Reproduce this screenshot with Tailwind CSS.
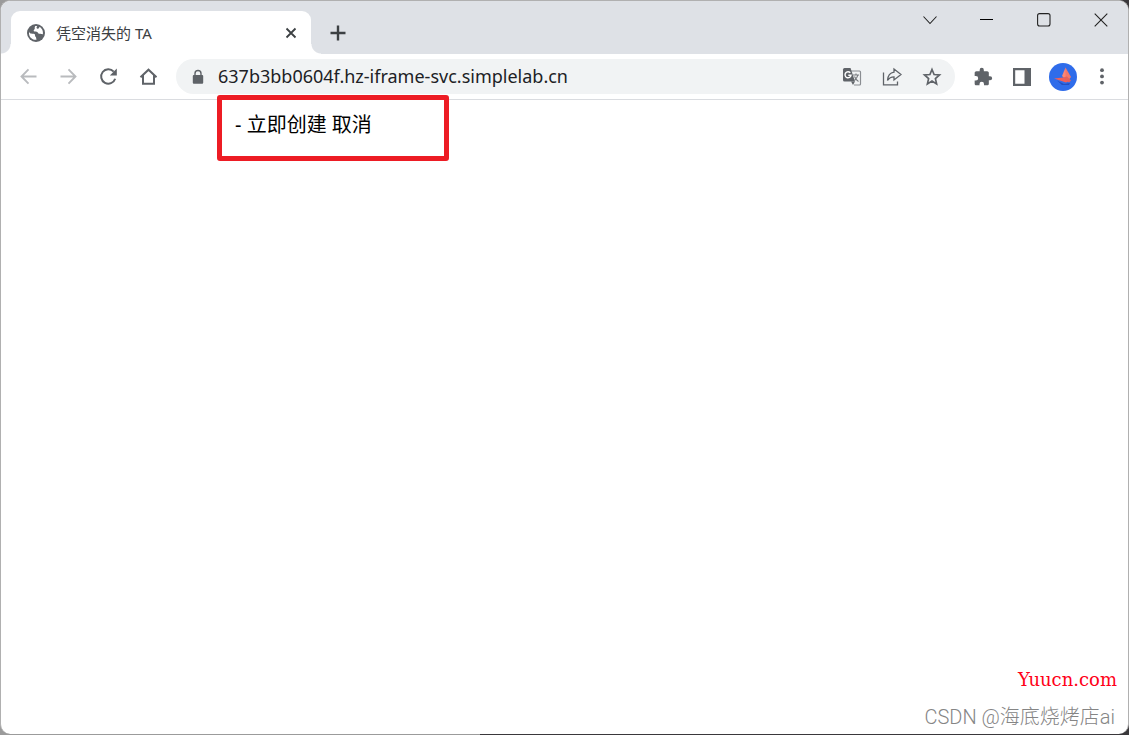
<!DOCTYPE html>
<html lang="zh-CN">
<head>
  <meta charset="UTF-8">
  <meta name="viewport" content="width=device-width, initial-scale=1.0">
  <title>凭空消失的 TA</title>
  <script src="https://cdn.jsdelivr.net/npm/@tailwindcss/browser@4"></script>
</head>
<body class="min-h-screen flex flex-col bg-[linear-gradient(to_right,#9b9b9b_480px,#3a383b_480px)] font-['Noto_Sans','Noto_Sans_CJK_SC',sans-serif] text-black">
  <div class="relative flex-1 flex flex-col border-t border-x border-[#b0b0b0] mb-px rounded-[10px] bg-white overflow-hidden">

    <!-- Tab strip -->
    <header class="h-[53px] flex items-end bg-[#dee1e6]">
      <div class="w-[10px] h-[10px] bg-[radial-gradient(circle_at_0_0,#dee1e6_9px,#fff_10px)]"></div>
      <div class="w-[300px] h-[43px] flex items-center pl-4 pr-[10px] rounded-t-[9px] bg-white">
        <svg class="w-[18px] h-[18px]" viewBox="0 0 18 18">
          <circle cx="9" cy="9" r="9" fill="#5f6368"/>
          <path fill="#fff" d="M2 7.5C2.500 9.800 4.500 9.500 6.500 9.800C8 10 8.300 11 8 12.200C9.300 12.500 9 14 9.500 15.800C6 16.300 2 13.500 2 9.500ZM8.300 2C7 3.500 8.500 4.500 7.300 5.500C6.200 6.300 6.500 7.700 8 7.500C10 7.200 10.500 8 11.200 9.200C12 10.300 14 9.700 15.900 10.200C16.500 6.500 14.500 3.800 12.300 2.700C12.500 4.500 11 5 10 4.500C9.300 4 9.500 3 10.200 2.100Z"/>
        </svg>
        <span class="flex-1 ml-[11px] text-[15px] leading-5 text-[#3c4043]">凭空消失的 TA</span>
        <button class="p-1" aria-label="关闭标签页">
          <svg class="w-3 h-3" viewBox="0 0 12 12" fill="none" stroke="#3c4043" stroke-width="1.800"><path d="M1.500 1.500l9 9M10.500 1.500l-9 9"/></svg>
        </button>
      </div>
      <div class="w-[10px] h-[10px] bg-[radial-gradient(circle_at_100%_0,#dee1e6_9px,#fff_10px)]"></div>
      <button class="self-center mt-[10px] ml-2 p-px" aria-label="新标签页">
        <svg class="w-4 h-4" viewBox="0 0 16 16" fill="none" stroke="#3c4043" stroke-width="2.400"><path d="M8 .5v15M.5 8h15"/></svg>
      </button>
      <div class="ml-auto self-start flex items-center h-[38px] pr-[20px] gap-[43px]">
        <button aria-label="搜索标签页">
          <svg class="w-[14px] h-[14px]" viewBox="0 0 14 14" fill="none" stroke="#222" stroke-width="1.100"><path d="M.5 3.500L7 10.500l6.500-7"/></svg>
        </button>
        <button aria-label="最小化">
          <svg class="w-[14px] h-[14px]" viewBox="0 0 14 14" fill="none" stroke="#000"><path d="M0 6.500h13"/></svg>
        </button>
        <button aria-label="最大化">
          <svg class="w-[14px] h-[14px]" viewBox="0 0 14 14" fill="none" stroke="#222" stroke-width="1.100"><rect x=".6" y=".6" width="12.400" height="12.400" rx="2"/></svg>
        </button>
        <button aria-label="关闭">
          <svg class="w-[14px] h-[14px]" viewBox="0 0 14 14" fill="none" stroke="#222" stroke-width="1.100"><path d="M.7 .7l12.600 12.600M13.300 .7L.7 13.300"/></svg>
        </button>
      </div>
    </header>

    <!-- Toolbar -->
    <nav class="h-[46px] flex items-center pl-[18px] pr-4 border-b border-[#dadce0] bg-white">
      <div class="flex items-center gap-5">
        <button aria-label="后退">
          <svg class="w-5 h-5" viewBox="0 0 20 20" fill="none" stroke="#b9bbbe" stroke-width="1.900"><path d="M17.500 9.500H3M9.500 2.300L2.500 9.500l7 7.200"/></svg>
        </button>
        <button aria-label="前进">
          <svg class="w-5 h-5" viewBox="0 0 20 20" fill="none" stroke="#b9bbbe" stroke-width="1.900"><path d="M1.500 9.500H16.500M9.500 2.300l7 7.200-7 7.200"/></svg>
        </button>
        <button aria-label="重新加载">
          <svg class="w-5 h-5" viewBox="0 0 20 20"><path d="M16.200 11.700A7.200 7.200 0 1 1 14.700 4.600" fill="none" stroke="#5f6368" stroke-width="2"/><path d="M17.800 1.400v7h-7z" fill="#5f6368"/></svg>
        </button>
        <button aria-label="主页">
          <svg class="w-5 h-5" viewBox="0 0 20 20" fill="none" stroke="#5f6368" stroke-width="2"><path d="M1.500 10.300L9.500 2.700l8 7.600M4 8.500v8.200h11V8.500"/></svg>
        </button>
      </div>

      <div class="flex-1 h-[35px] flex items-center ml-[17px] pl-[15px] pr-[13px] rounded-full bg-[#f1f3f4]">
        <svg class="w-[14px] h-4 shrink-0" viewBox="0 0 14 16"><path d="M4 7V4.500a3 3 0 0 1 6 0V7" fill="none" stroke="#5f6368" stroke-width="1.400"/><rect x="1.800" y="6" width="10.400" height="8.800" rx="1" fill="#5f6368"/></svg>
        <input type="text" aria-label="地址" value="637b3bb0604f.hz-iframe-svc.simplelab.cn" class="flex-1 min-w-0 ml-[13px] pb-px bg-transparent text-[18px] leading-6 text-[#202124] outline-none">
        <div class="flex items-center gap-5">
          <button aria-label="翻译此页">
            <svg class="w-5 h-5" viewBox="0 0 20 20">
              <path d="M9 4h8.500q1 0 1 1v12q0 1-1 1H12" fill="none" stroke="#8a8d91" stroke-width="1.200"/>
              <path d="M2.500 1h6l4.500 13.500H2.500Q1 14.500 1 13V2.500Q1 1 2.500 1Z" fill="#5f6368"/>
              <path d="M9 14.500h4l-2 3.500z" fill="#5f6368"/>
              <path d="M8.300 5.800A3 3 0 1 0 9 8.300H6.300" fill="none" stroke="#fff" stroke-width="1.400"/>
              <path d="M11 8h6M14 6.500v1.500M15.800 8.300q-1 3-3.300 5.200M12.500 9.500q1.500 3.500 4 5" fill="none" stroke="#777a7e" stroke-width="1.100"/>
            </svg>
          </button>
          <button aria-label="分享此页">
            <svg class="w-5 h-5" viewBox="0 0 20 20" fill="none" stroke="#5f6368" stroke-width="1.300"><path d="M1.500 5.500v12.300h14V14.500M12 2l7 5.500-7 5.500V9.800C9 9.800 7 11 5.500 13.500 5.800 9 8 5.800 12 5.200Z"/></svg>
          </button>
          <button aria-label="为此标签页添加书签">
            <svg class="w-5 h-5" viewBox="0 0 20 20" fill="none" stroke="#5f6368" stroke-width="1.700"><path d="M10 2.500l2.100 5 5.400.5-4.100 3.600 1.200 5.300L10 14.100l-4.600 2.800 1.200-5.300L2.500 8l5.400-.5Z"/></svg>
          </button>
        </div>
      </div>

      <div class="flex items-center ml-[18px]">
        <button aria-label="扩展程序">
          <svg class="w-5 h-5" viewBox="0 0 24 24" fill="#5f6368"><path d="M20.500 11H19V7c0-1.100-.9-2-2-2h-4V3.500a2.500 2.500 0 0 0-5 0V5H4c-1.100 0-2 .9-2 2v3.800h1.500a2.700 2.700 0 0 1 0 5.400H2V20c0 1.100.9 2 2 2h3.800v-1.500a2.700 2.700 0 0 1 5.400 0V22H17c1.100 0 2-.9 2-2v-4h1.500a2.500 2.500 0 0 0 0-5z"/></svg>
        </button>
        <button class="ml-5" aria-label="侧边栏">
          <svg class="w-[18px] h-[18px]" viewBox="0 0 18 18"><path fill="#5f6368" fill-rule="evenodd" d="M0 0h18v18H0ZM2.200 2.200v13.600h9.300V2.200Z"/></svg>
        </button>
        <button class="ml-[18px]" aria-label="用户">
          <svg class="w-7 h-7" viewBox="0 0 28 28">
            <circle cx="14" cy="14" r="14" fill="#2f6cea"/>
            <path d="M8 17.500l7 3.500 6-1-1 2-7 0z" fill="#244fc0"/>
            <path d="M5 15.500l9-1 6 3.500-3 1.500z" fill="#f0605c"/>
            <path d="M16.500 4.500L13 13l3 3 2-3z" fill="#ff8674"/>
            <path d="M16.500 4.500L22 14l-2 2.500-3.500-2z" fill="#f5776a"/>
            <path d="M14 14.500l4-1 4 4-2 2-3-2z" fill="#e9615a"/>
          </svg>
        </button>
        <button class="ml-[15px]" aria-label="菜单">
          <svg class="w-5 h-5" viewBox="0 0 20 20" fill="#5f6368"><circle cx="10" cy="3.200" r="1.900"/><circle cx="10" cy="9.400" r="1.900"/><circle cx="10" cy="15.600" r="1.900"/></svg>
        </button>
      </div>
    </nav>

    <!-- Page -->
    <main class="flex-1 flex flex-col justify-between">
      <p class="pt-[11px] pl-[234px] text-[20px] leading-7">- 立即创建 取消</p>
      <footer class="flex flex-col items-end pb-[3px]">
        <a href="#" class="pr-[11px] font-['DejaVu_Serif',serif] text-[18px] leading-6 text-[#ff0018]">Yuucn.com</a>
        <p class="mt-[11px] pr-[13px] font-['Roboto','Noto_Sans_CJK_SC',sans-serif] text-[20px] leading-7 font-light text-[#858585]">CSDN @海底烧烤店ai</p>
      </footer>
    </main>

    <!-- Highlight box over the page text -->
    <div class="absolute left-[216px] top-[94px] w-[232px] h-[66px] border-5 border-[#ed1c24] rounded-[3px]"></div>
  </div>
</body>
</html>
